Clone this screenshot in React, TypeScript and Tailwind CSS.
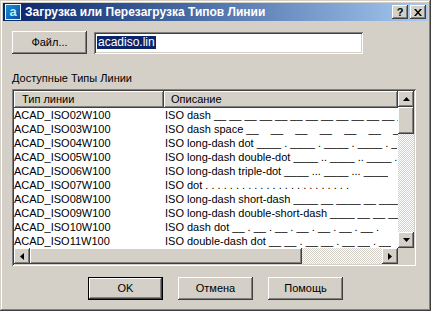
const raised =
  "shadow-[inset_-1px_-1px_#404040,inset_1px_1px_#ffffff,inset_-2px_-2px_#808080,inset_2px_2px_#d4d0c8]";
const sunken =
  "shadow-[inset_1px_1px_#808080,inset_-1px_-1px_#ffffff,inset_2px_2px_#404040,inset_-2px_-2px_#d4d0c8]";
const track =
  "bg-[repeating-conic-gradient(#ffffff_0%_25%,#d4d0c8_0%_50%)] bg-size-[2px_2px]";

const rows: [string, string][] = [
  ["ACAD_ISO02W100", "ISO dash __ __ __ __ __ __ __ __ __ __ __ __ __ __ _"],
  ["ACAD_ISO03W100", "ISO dash space __    __    __    __    __    __    __"],
  ["ACAD_ISO04W100", "ISO long-dash dot ____ . ____ . ____ . ____ . _"],
  ["ACAD_ISO05W100", "ISO long-dash double-dot ____ .. ____ .. ____ ."],
  ["ACAD_ISO06W100", "ISO long-dash triple-dot ____ ... ____ ... ____"],
  ["ACAD_ISO07W100", "ISO dot . . . . . . . . . . . . . . . . . . . . . . . ."],
  ["ACAD_ISO08W100", "ISO long-dash short-dash ____ __ ____ __ ____ _"],
  ["ACAD_ISO09W100", "ISO long-dash double-short-dash ____ __ __ ____"],
  ["ACAD_ISO10W100", "ISO dash dot __ . __ . __ . __ . __ . __ . __ ."],
  ["ACAD_ISO11W100", "ISO double-dash dot __ __ . __ __ . __ __ . __"],
];

function Arrow({ dir }: { dir: "up" | "down" | "left" | "right" }) {
  const pts = {
    up: "0,4 7,4 3.5,0",
    down: "0,0 7,0 3.5,4",
    left: "4,0 4,7 0,3.5",
    right: "0,0 0,7 4,3.5",
  }[dir];
  const vert = dir === "up" || dir === "down";
  return (
    <svg width={vert ? 7 : 4} height={vert ? 4 : 7} viewBox={vert ? "0 0 7 4" : "0 0 4 7"}>
      <polygon points={pts} fill="#000" />
    </svg>
  );
}

function ScrollBtn({ dir }: { dir: "up" | "down" | "left" | "right" }) {
  return (
    <div className={`w-[16px] h-[16px] shrink-0 bg-[#d4d0c8] flex items-center justify-center ${raised}`}>
      <Arrow dir={dir} />
    </div>
  );
}

function Button({ label, isDefault }: { label: string; isDefault?: boolean }) {
  return (
    <div
      className={`w-[75px] h-[23px] flex items-center justify-center bg-[#d4d0c8] text-black ${
        isDefault ? "border border-black" : ""
      } ${raised}`}
    >
      {label}
    </div>
  );
}

export default function App() {
  return (
    <div
      className="w-[431px] h-[311px] bg-[#d4d0c8] p-[3px] flex flex-col text-[11px] leading-[13px] text-black shadow-[inset_-1px_-1px_#404040,inset_1px_1px_#d4d0c8,inset_-2px_-2px_#808080,inset_2px_2px_#ffffff]"
      style={{ fontFamily: '"Liberation Sans", Arial, sans-serif' }}
    >
      {/* title bar */}
      <div className="h-[18px] flex items-center pl-[2px] pr-[2px] bg-gradient-to-r from-[#0a246a] to-[#a6caf0]">
        <div className="w-[16px] h-[16px] bg-[#e8f4ff] p-[1px] shrink-0">
          <div className="w-full h-full bg-gradient-to-br from-[#1e90d8] to-[#0a4aa0] flex items-center justify-center text-[#aef0ff] text-[13px] leading-none font-bold pb-[2px]">
            a
          </div>
        </div>
        <div className="ml-[4px] text-white font-bold text-[12px] whitespace-nowrap">
          Загрузка или Перезагрузка Типов Линии
        </div>
        <div className="ml-auto flex gap-[2px]">
          <div className={`w-[16px] h-[14px] bg-[#d4d0c8] flex items-center justify-center font-bold text-[11px] ${raised}`}>
            ?
          </div>
          <div className={`w-[16px] h-[14px] bg-[#d4d0c8] flex items-center justify-center ${raised}`}>
            <svg width="8" height="7" viewBox="0 0 8 7">
              <path d="M0 0h2l2 2.5 2-2.5h2l-3 3.5 3 3.5h-2l-2-2.5-2 2.5h-2l3-3.5z" fill="#000" />
            </svg>
          </div>
        </div>
      </div>

      {/* body */}
      <div className="flex flex-col pl-[9px] pr-[12px]">
        <div className="flex items-center mt-[10px] gap-[7px]">
          <Button label="Файл..." />
          <div className={`w-[269px] h-[22px] bg-white flex items-center px-[3px] ${sunken}`}>
            <span className="bg-[#0a246a] text-white px-[1px] text-[12px] leading-[13px]">acadiso.lin</span>
          </div>
        </div>

        <div className="mt-[18px]">Доступные Типы Линии</div>

        <div className={`mt-[4px] w-[404px] h-[177px] bg-white p-[2px] flex flex-col ${sunken}`}>
          <div className="flex flex-1 min-h-0">
            <div className="flex flex-col flex-1 min-w-0">
              <div className="flex h-[17px] shrink-0">
                <div className={`w-[150px] bg-[#d4d0c8] pl-[8px] flex items-center ${raised}`}>Тип линии</div>
                <div className={`flex-1 bg-[#d4d0c8] pl-[7px] flex items-center ${raised}`}>Описание</div>
              </div>
              <div className="flex flex-col overflow-hidden">
                {rows.map(([name, desc]) => (
                  <div key={name} className="flex h-[14px] items-center whitespace-pre">
                    <div className="w-[151px] shrink-0">{name}</div>
                    <div className="overflow-hidden">{desc}</div>
                  </div>
                ))}
              </div>
            </div>
            <div className={`w-[16px] flex flex-col shrink-0 ${track}`}>
              <ScrollBtn dir="up" />
              <div className={`h-[27px] bg-[#d4d0c8] ${raised}`} />
              <div className="flex-1" />
              <ScrollBtn dir="down" />
            </div>
          </div>
          <div className={`h-[16px] flex shrink-0 ${track}`}>
            <ScrollBtn dir="left" />
            <div className={`w-[272px] bg-[#d4d0c8] ${raised}`} />
            <div className="flex-1" />
            <ScrollBtn dir="right" />
            <div className="w-[16px] bg-[#d4d0c8]" />
          </div>
        </div>

        <div className="flex justify-center gap-[15px] mt-[11px] pl-[3px]">
          <Button label="OK" isDefault />
          <Button label="Отмена" />
          <Button label="Помощь" />
        </div>
      </div>
    </div>
  );
}
